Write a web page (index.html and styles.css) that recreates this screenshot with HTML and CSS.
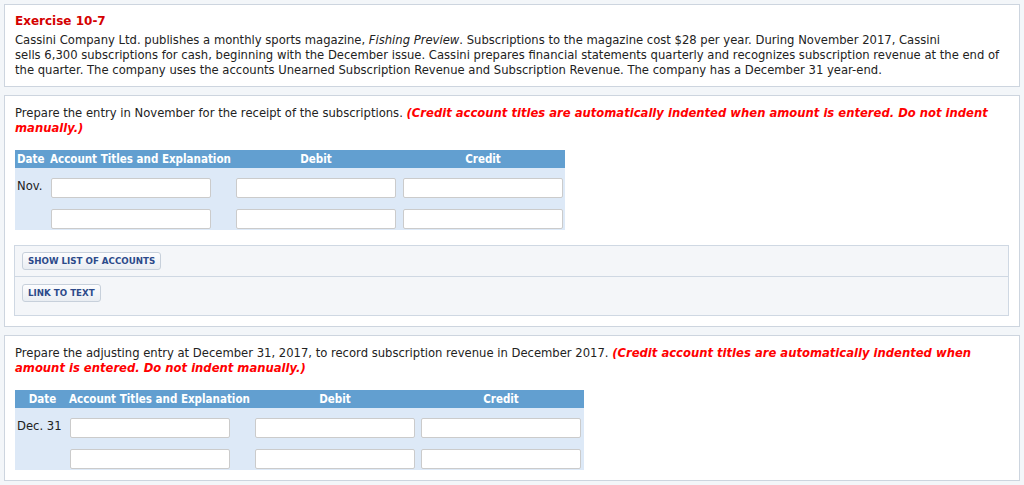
FILE: index.html
```html
<!DOCTYPE html>
<html>
<head>
  <meta charset="UTF-8" />
  <title>Exercise 10-7</title>
  <link rel="stylesheet" href="styles.css">
</head>
<body>
  <div class="card intro">
    <h1 class="exercise-title">Exercise 10-7</h1>
    <p>Cassini Company Ltd. publishes a monthly sports magazine, <em>Fishing Preview</em>. Subscriptions to the magazine cost $28 per year. During November 2017, Cassini<br>sells 6,300 subscriptions for cash, beginning with the December issue. Cassini prepares financial statements quarterly and recognizes subscription revenue at the end of<br>the quarter. The company uses the accounts Unearned Subscription Revenue and Subscription Revenue. The company has a December 31 year-end.</p>
  </div>

  <div class="card">
    <p class="question">Prepare the entry in November for the receipt of the subscriptions. <span class="note">(Credit account titles are automatically indented when amount is entered. Do not indent manually.)</span></p>

    <div class="journal journal-nov">
      <div class="jhead">
        <div class="date-head">Date</div>
        <div class="acct-head">Account Titles and Explanation</div>
        <div class="amt-head">Debit</div>
        <div class="amt-head">Credit</div>
      </div>
      <div class="jbody">
        <div class="date-cell">Nov.</div>
        <input class="field" type="text"><input class="field" type="text"><input class="field" type="text">
        <div class="date-cell"></div>
        <input class="field" type="text"><input class="field" type="text"><input class="field" type="text">
      </div>
    </div>

    <div class="tools">
      <div class="tools-row"><button class="tool-button">Show List of Accounts</button></div>
      <div class="tools-row last"><button class="tool-button">Link to Text</button></div>
    </div>
  </div>

  <div class="card">
    <p class="question">Prepare the adjusting entry at December 31, 2017, to record subscription revenue in December 2017. <span class="note">(Credit account titles are automatically indented when amount is entered. Do not indent manually.)</span></p>

    <div class="journal journal-dec">
      <div class="jhead">
        <div class="date-head">Date</div>
        <div class="acct-head">Account Titles and Explanation</div>
        <div class="amt-head">Debit</div>
        <div class="amt-head">Credit</div>
      </div>
      <div class="jbody">
        <div class="date-cell">Dec. 31</div>
        <input class="field" type="text"><input class="field" type="text"><input class="field" type="text">
        <div class="date-cell"></div>
        <input class="field" type="text"><input class="field" type="text"><input class="field" type="text">
      </div>
    </div>
  </div>
</body>
</html>
```

FILE: styles.css
```css
body {
  margin: 0;
  padding: 4px;
  background-color: #f3f6f9;
  font-family: "DejaVu Sans", Verdana, sans-serif;
  font-size: 11.6px;
  line-height: 15px;
  color: #222;
}
.card {
  background-color: #fff;
  border: 1px solid #cdd5df;
  padding: 9px 10px 10px;
  margin-bottom: 8px;
}
.card.intro {
  padding-bottom: 8px;
}
.card p {
  margin: 0;
}
.card p.question {
  margin-top: 1px;
}
.exercise-title {
  margin: 0 0 4px;
  font-size: 12px;
  line-height: 15px;
  color: #d40000;
}
.note {
  color: #f00;
  font-weight: bold;
  font-style: italic;
}

/* journal entry grid */
.journal {
  margin-top: 14px;
}
.journal-nov {
  width: 550px;
}
.journal-dec {
  width: 569px;
}
.jhead,
.jbody {
  display: grid;
}
.journal-nov .jhead,
.journal-nov .jbody {
  grid-template-columns: 36px 185px 167px 162px;
}
.journal-dec .jhead,
.journal-dec .jbody {
  grid-template-columns: 55px 185px 166px 163px;
}
.jhead {
  height: 18px;
  background-color: #629fd0;
  color: #fff;
  font-family: "DejaVu Sans Condensed", "DejaVu Sans", sans-serif;
  font-stretch: condensed;
  font-weight: bold;
  font-size: 11.5px;
  line-height: 18px;
}
.date-head {
  padding-left: 2px;
}
.journal-dec .date-head {
  text-align: center;
  padding-left: 0;
}
.acct-head {
  margin-left: -1px;
  white-space: nowrap;
}
.amt-head {
  width: 160px;
  text-align: center;
}
.jbody {
  background-color: #dde9f7;
  padding: 10px 0 1px;
  row-gap: 11px;
}
.date-cell {
  padding-left: 2px;
  padding-top: 1px;
}
.field {
  box-sizing: border-box;
  width: 160px;
  height: 20px;
  margin: 0;
  border: 1px solid #cbcbcb;
  border-radius: 2px;
  background-color: #fff;
}

/* button panel */
.tools {
  margin: 15px 0 0 -1px;
  border: 1px solid #cfd8e3;
  background-color: #f4f6f9;
}
.tools-row {
  padding: 6px 7px;
  border-bottom: 1px solid #cfd8e3;
}
.tools-row.last {
  border-bottom: none;
  padding-top: 7px;
  padding-bottom: 13px;
}
.tool-button {
  display: block;
  height: 18px;
  padding: 0 5px;
  border: 1px solid #c7d0db;
  border-radius: 3px;
  background: linear-gradient(#fdfdfe, #e9edf2);
  font-family: "DejaVu Sans", Verdana, sans-serif;
  font-size: 8.7px;
  font-weight: bold;
  text-transform: uppercase;
  color: #2c4a8a;
}
```
